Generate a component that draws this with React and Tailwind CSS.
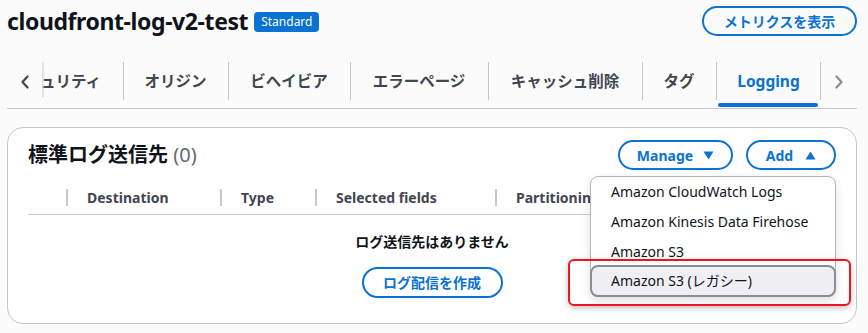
import React from 'react'

const TABS = [
  { label: 'オリジン', w: 'w-[105px]' },
  { label: 'ビヘイビア', w: 'w-[122px]' },
  { label: 'エラーページ', w: 'w-[138px]' },
  { label: 'キャッシュ削除', w: 'w-[154px]' },
  { label: 'タグ', w: 'w-[74px]' },
]

const COLS = [
  { label: 'Destination', w: 'w-[154px]' },
  { label: 'Type', w: 'w-[95px]' },
  { label: 'Selected fields', w: 'w-[180px]' },
  { label: 'Partitioning', w: 'w-[180px]' },
]

const ITEMS = ['Amazon CloudWatch Logs', 'Amazon Kinesis Data Firehose', 'Amazon S3']

function Caret({ up }) {
  return (
    <svg width="11" height="9" viewBox="0 0 11 9" className="fill-current">
      {up ? <path d="M5.5 0.5 L10.5 8.5 L0.5 8.5 Z" /> : <path d="M0.5 0.5 L10.5 0.5 L5.5 8.5 Z" />}
    </svg>
  )
}

function Chevron({ dir }) {
  return (
    <svg width="10" height="14" viewBox="0 0 10 14" fill="none" stroke="currentColor" strokeWidth="2.2" strokeLinecap="round" strokeLinejoin="round">
      {dir === 'left' ? <path d="M7.5 1.5 L2.5 7 L7.5 12.5" /> : <path d="M2.5 1.5 L7.5 7 L2.5 12.5" />}
    </svg>
  )
}

export default function App() {
  return (
    <div className="relative w-[868px] h-[333px] overflow-hidden bg-[#fbfbfc] font-['Noto_Sans','Noto_Sans_CJK_JP',sans-serif] text-[#0f141a]">

      {/* ヘッダー */}
      <div className="w-[850px] ml-[7px] flex items-center justify-between pt-[6px] h-[36px]">
        <div className="flex items-center gap-[6px]">
          <h1 className="text-[23px] leading-[30px] font-bold tracking-[-0.4px]">cloudfront-log-v2-test</h1>
          <span className="rounded-[4px] bg-[#0972d3] text-white text-[12px] leading-[20px] px-[7px] mt-[1px]">Standard</span>
        </div>
        <button className="h-[30px] w-[155px] rounded-full border-2 border-[#0972d3] text-[#0972d3] text-[14px] font-bold">
          メトリクスを表示
        </button>
      </div>

      {/* タブ */}
      <div className="w-[850px] ml-[7px] mt-[26px] h-[47px] flex border-b border-[#c6c6cd]">
        <div className="w-[35px] flex items-center justify-center pb-[7px] text-[#424650]">
          <Chevron dir="left" />
        </div>
        <div className="relative w-[81px] overflow-hidden flex justify-end items-center pb-[7px] pr-[22px]">
          <div className="absolute left-0 top-0 h-[35px] w-[3px] bg-gradient-to-r from-[#d9d9dd] to-transparent" />
          <span className="whitespace-nowrap text-[15.5px] font-bold text-[#414750]">セキュリティ</span>
        </div>
        {TABS.map(t => (
          <div key={t.label} className={`${t.w} relative flex items-center justify-center pb-[7px]`}>
            <div className="absolute left-0 top-0 h-[38px] w-px bg-[#c6c6cd]" />
            <span className="text-[15.5px] font-bold text-[#414750] whitespace-nowrap">{t.label}</span>
          </div>
        ))}
        <div className="w-[105px] relative flex items-center justify-center pb-[7px]">
          <div className="absolute left-0 top-0 h-[38px] w-px bg-[#c6c6cd]" />
          <div className="absolute right-0 top-0 h-[38px] w-px bg-[#c6c6cd]" />
          <span className="text-[15.5px] font-bold text-[#0972d3]">Logging</span>
          <div className="absolute left-[2px] right-[3px] bottom-[1px] h-[4px] rounded-full bg-[#0972d3]" />
        </div>
        <div className="flex-1 flex items-center justify-center pb-[7px] text-[#8c8c94]">
          <Chevron dir="right" />
        </div>
      </div>

      {/* カード */}
      <div className="w-[850px] ml-[7px] mt-[18px] h-[197px] rounded-[16px] border border-[#c6c6cd] bg-white px-[20px]">
        <div className="flex items-center justify-between pt-[12px]">
          <h2 className="text-[20px] font-bold leading-[30px] -mt-[1px]">
            標準ログ送信先 <span className="font-normal text-[#656871]">(0)</span>
          </h2>
          <div className="flex gap-[13px] shrink-0">
            <button className="h-[30px] w-[115px] shrink-0 rounded-full border-2 border-[#0972d3] text-[#0972d3] text-[14px] font-bold flex items-center justify-center gap-[10px]">
              Manage <Caret />
            </button>
            <button className="h-[30px] w-[90px] shrink-0 rounded-full border-2 border-[#0972d3] text-[#0972d3] text-[14px] font-bold flex items-center justify-center gap-[12px]">
              Add <Caret up />
            </button>
          </div>
        </div>

        {/* テーブル */}
        <div className="mt-[10px] h-[35px] flex items-center border-b border-[#c6c6cd]">
          <div className="w-[38px]" />
          {COLS.map(c => (
            <div key={c.label} className={`${c.w} flex items-center`}>
              <div className="w-[2px] h-[17px] bg-[#c6c6cd]" />
              <span className="pl-[19px] text-[14px] font-bold text-[#424650] whitespace-nowrap">{c.label}</span>
            </div>
          ))}
        </div>
        <div className="flex flex-col items-center">
          <p className="mt-[16px] text-[14px] font-bold leading-[22px]">ログ送信先はありません</p>
          <button className="mt-[14px] h-[31px] w-[141px] rounded-full border-2 border-[#0972d3] text-[#0972d3] text-[14px] font-bold">
            ログ配信を作成
          </button>
        </div>
      </div>

      {/* ドロップダウン */}
      <div className="absolute left-[590px] top-[176px] w-[246px] h-[121px] rounded-[8px] border-[1.5px] border-[#b4b4bb] bg-white shadow-[0_4px_10px_rgba(0,7,22,0.12)]">
        <div className="-mt-[1px]">
          {ITEMS.map(i => (
            <div key={i} className="h-[30px] flex items-center pl-[20px] text-[14px] text-[#0f141a]">{i}</div>
          ))}
        </div>
      </div>
      <div className="absolute left-[590px] top-[265px] w-[246px] h-[32px] rounded-[8px] border-2 border-[#8c8c94] bg-[#f0f0f4] flex items-center pl-[19px] pb-[2px] text-[14px] text-[#0f141a]">
        Amazon S3 (レガシー)
      </div>

      {/* 強調枠 */}
      <div className="absolute left-[568px] top-[259px] w-[283px] h-[47px] rounded-[6px] border-2 border-[#f0141e] shadow-[0_2px_6px_rgba(0,0,0,0.25)]" />
    </div>
  )
}
